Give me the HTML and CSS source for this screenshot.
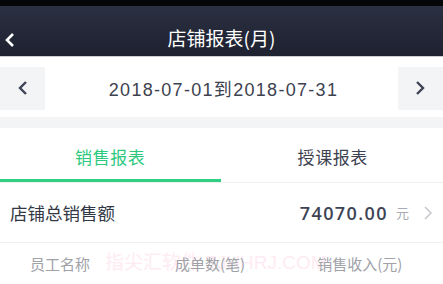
FILE: index.html
```html
<!DOCTYPE html>
<html>
<head>
<meta charset="utf-8">
<link rel="stylesheet" href="styles.css">
</head>
<body>
<div class="status"></div>
<header class="nav">
  <svg class="nav-back" width="12" height="16" viewBox="0 0 12 16"><path d="M9 2 L3 8 L9 14" fill="none" stroke="#fff" stroke-width="2.6"/></svg>
  <div class="nav-title">店铺报表(月)</div>
</header>
<div class="date-row">
  <div class="date-btn"><svg width="12" height="16" viewBox="0 0 12 16"><path d="M9 2 L3 8 L9 14" fill="none" stroke="#3d4354" stroke-width="2.4"/></svg></div>
  <div class="date-text">2018-07-01到2018-07-31</div>
  <div class="date-btn"><svg width="12" height="16" viewBox="0 0 12 16"><path d="M3 2 L9 8 L3 14" fill="none" stroke="#3d4354" stroke-width="2.4"/></svg></div>
</div>
<div class="gap"></div>
<div class="tabs">
  <div class="tab active">销售报表</div>
  <div class="tab">授课报表</div>
</div>
<div class="total">
  <div class="total-label">店铺总销售额</div>
  <div class="total-value">74070.00</div>
  <div class="total-unit">元</div>
  <svg class="total-arrow" width="10" height="16" viewBox="0 0 10 16"><path d="M2 2 L8 8 L2 14" fill="none" stroke="#c8c9cc" stroke-width="1.6"/></svg>
</div>
<div class="thead">
  <div class="watermark">指尖汇软件 ZJHHRJ.COM</div>
  <div class="th c1">员工名称</div>
  <div class="th c2">成单数(笔)</div>
  <div class="th c3">销售收入(元)</div>
</div>
</body>
</html>
```
FILE: styles.css
```css
* { box-sizing: border-box; }
html, body { margin: 0; padding: 0; }
body {
  width: 443px; height: 284px; overflow: hidden;
  background: #fff;
  font-family: "Noto Sans CJK SC", "Noto Sans", sans-serif;
}
.status { height: 6px; background: #050608; }
.nav {
  position: relative;
  height: 51px;
  background: linear-gradient(#2b3042, #1d2130);
  border-bottom: 1px solid #c9cbd0;
  display: flex; align-items: center; justify-content: center;
  padding-top: 14px;
}
.nav-back { position: absolute; left: 4px; top: 26px; }
.nav-title { color: #fff; font-size: 19px; line-height: 20px; }
.date-row {
  height: 60px;
  display: flex; align-items: center; justify-content: space-between;
  padding-top: 2px;
}
.date-btn {
  width: 45px; height: 43px; background: #f3f4f6;
  display: flex; align-items: center; justify-content: center;
}
.date-text {
  font-size: 18px; color: #3d4250; letter-spacing: 1.3px;
  font-family: "Liberation Sans", "Noto Sans CJK SC", sans-serif;
  margin-left: 4px;
}
.gap { height: 11px; background: #f3f4f6; }
.tabs {
  height: 55px; display: flex;
  border-bottom: 1px solid #eeeff1;
}
.tab {
  flex: 1; display: flex; align-items: center; justify-content: center;
  font-size: 17px; letter-spacing: 0.6px; color: #3d4250; padding-top: 2px;
}
.tab.active { color: #2dc97f; border-bottom: 3px solid #2fd083; padding-top: 5px; }
.tab + .tab { padding-left: 2px; }
.total {
  height: 60px; display: flex; align-items: center;
  padding: 0 10px 0 10px;
  border-bottom: 1px solid #eeeff1;
}
.total-label { flex: 1; font-size: 17.5px; color: #333845; }
.total-value {
  font-size: 18px; font-weight: 600; color: #3d4354; letter-spacing: 1.4px;
  font-family: "Open Sans", "Noto Sans", sans-serif;
}
.total-unit { font-size: 13px; color: #a9abb2; margin-left: 8px; }
.total-arrow { margin-left: 14px; }
.thead {
  position: relative;
  height: 40px; display: flex; align-items: center;
  font-size: 15px; color: #a0a2a8;
}
.th { position: relative; }
.th.c1 { margin-left: 30px; }
.th.c2 { margin-left: 85px; }
.th.c3 { margin-left: 72px; }
.watermark {
  position: absolute; left: 105px; top: 4px;
  color: #feebf3; font-size: 19px; white-space: nowrap;
  font-family: "Liberation Sans", "Noto Sans CJK SC", sans-serif;
}
```
